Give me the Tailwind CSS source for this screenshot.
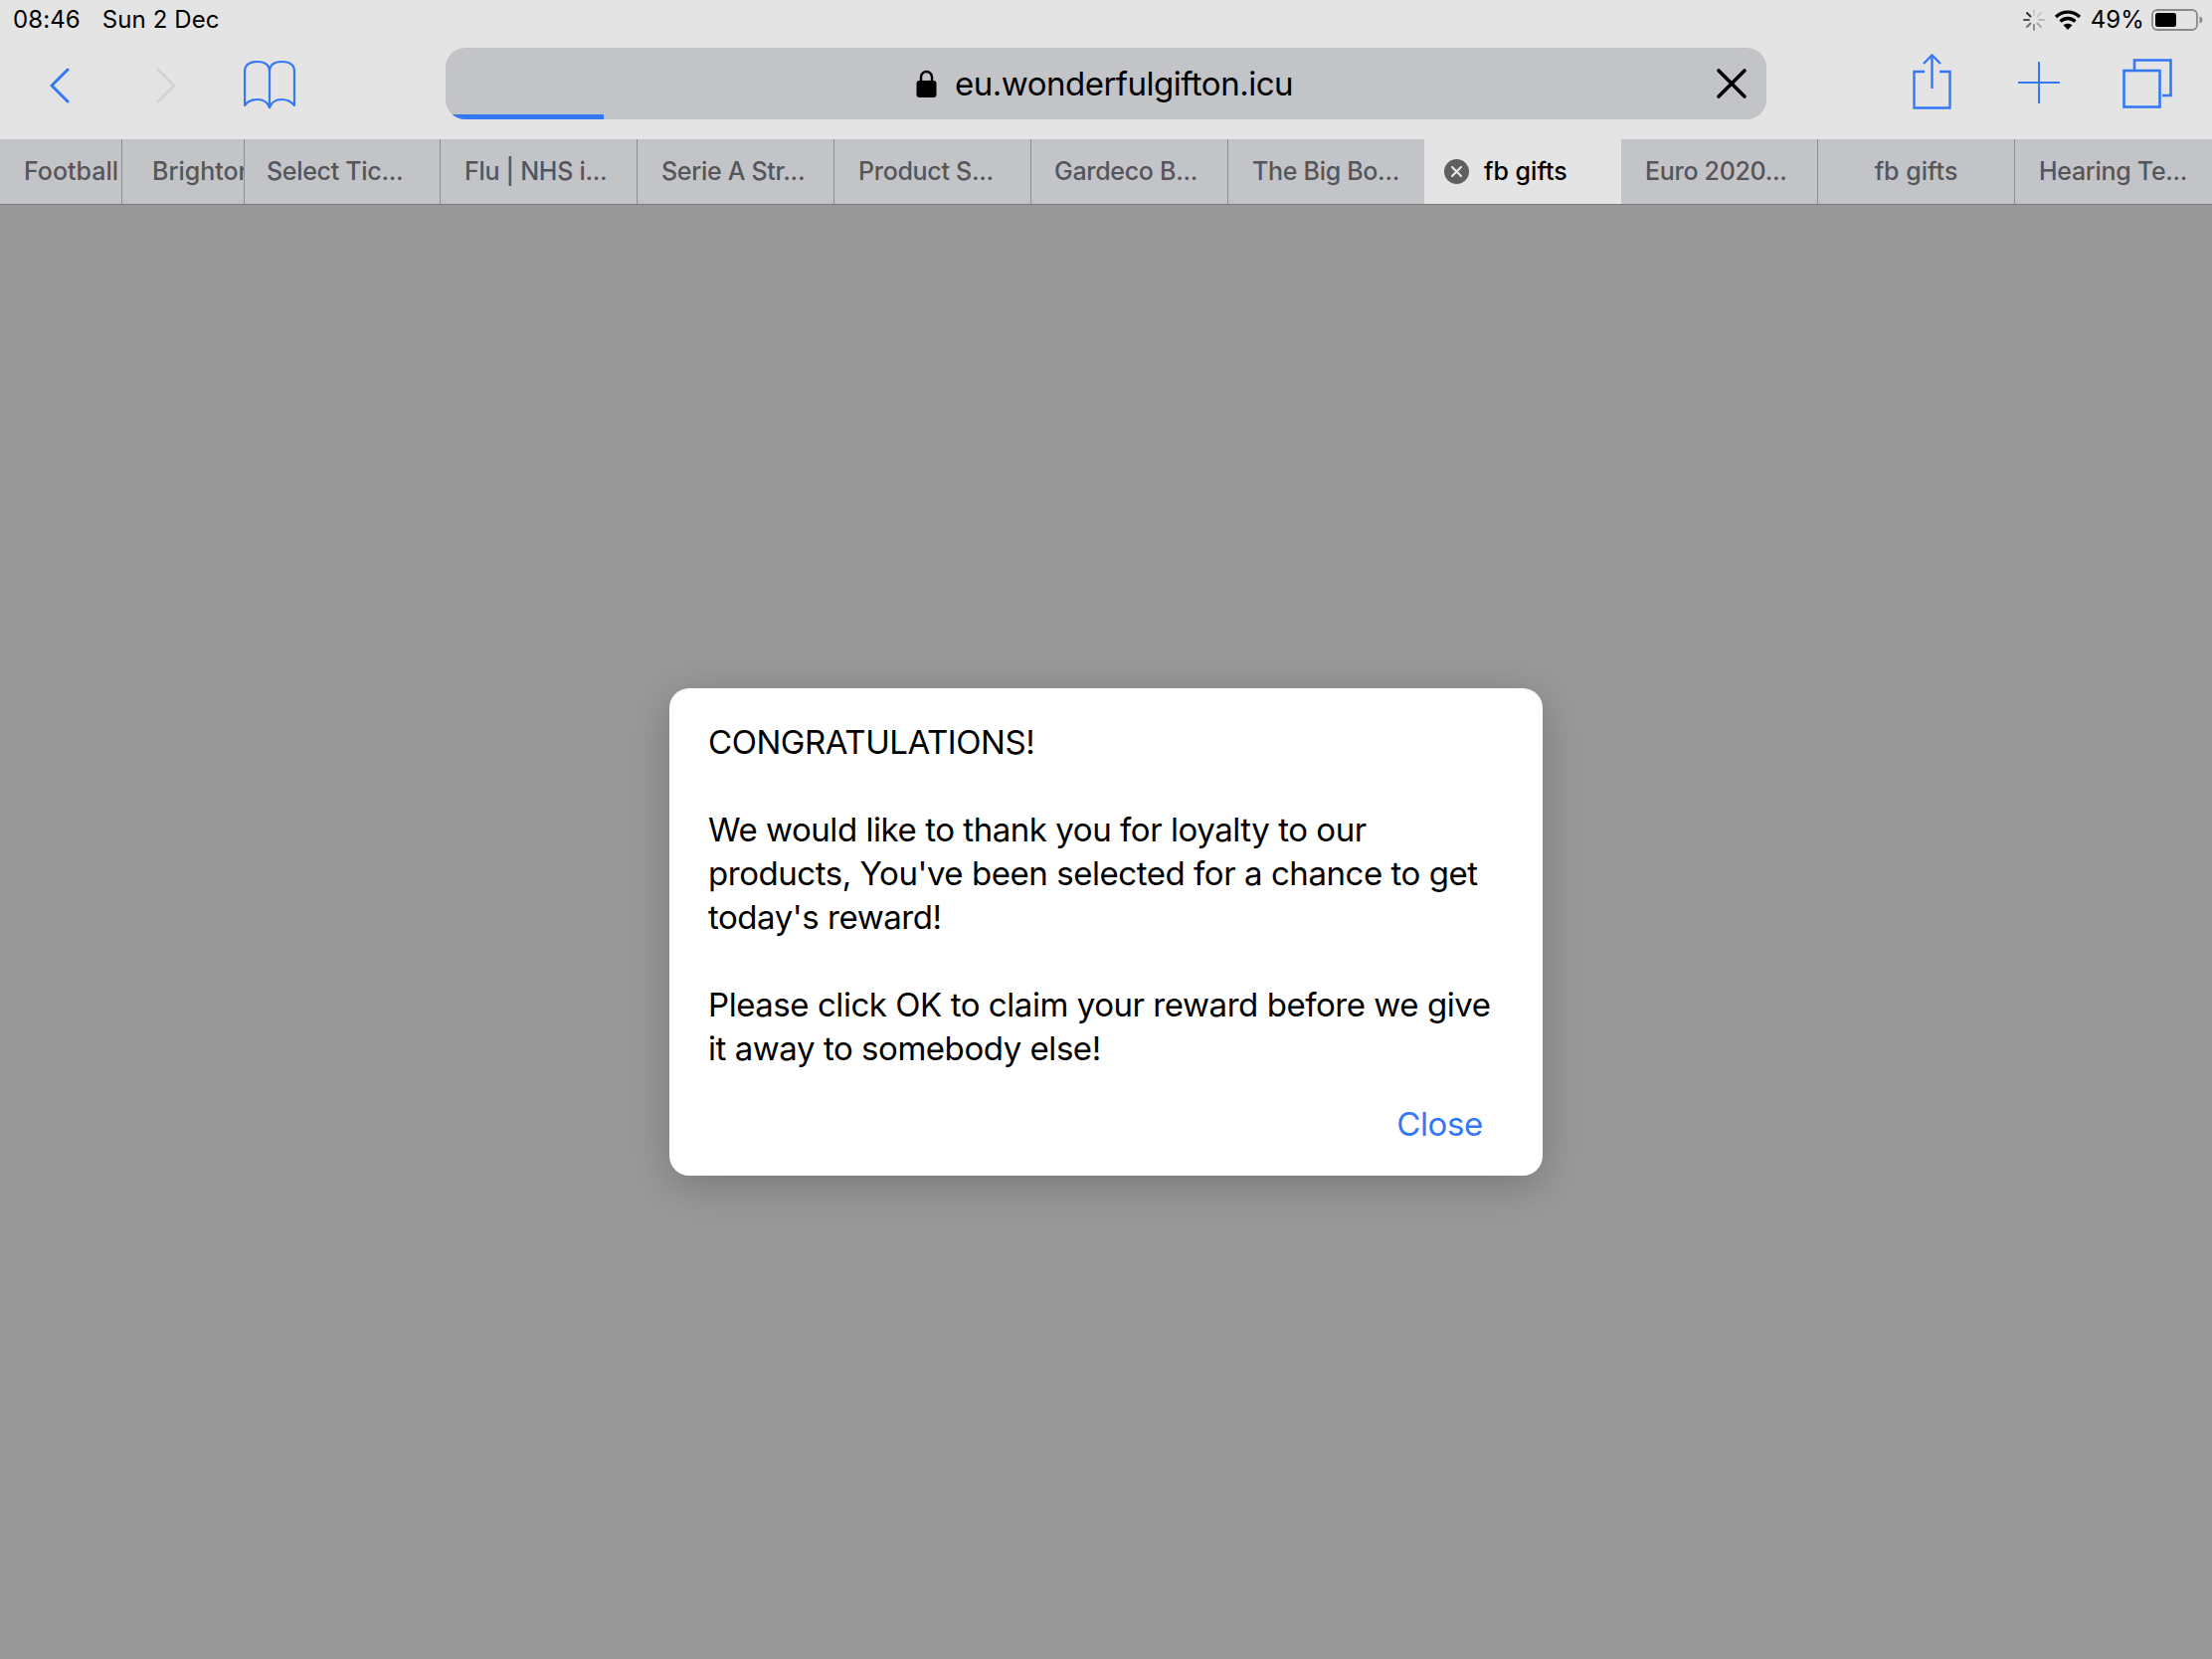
<!DOCTYPE html>
<html lang="en">
<head>
<meta charset="utf-8">
<title>fb gifts</title>
<script src="https://cdn.jsdelivr.net/npm/@tailwindcss/browser@4"></script>
</head>
<body class="m-0">
<div class="w-[2224px] h-[1668px] overflow-hidden flex flex-col bg-[#999999] font-[Inter,sans-serif] text-black">
  <header class="h-[205px] shrink-0 flex flex-col bg-[#e4e4e4]">
    <div class="h-[48px] shrink-0 flex items-start justify-between pt-[5px] pl-[13px] pr-[9px] text-[24px] leading-[30px] tracking-[0.1px]">
      <div class="flex gap-[22px]"><span>08:46</span><span>Sun 2 Dec</span></div>
      <div class="flex items-center gap-[8px] h-[30px]">
        <svg class="w-[22px] h-[22px] mr-[1px]" viewBox="0 0 22 22" fill="none" stroke-width="2" stroke-linecap="round">
          <path d="M11 1v5" stroke="#c8c8c8"/><path d="M18 4l-3.500 3.500" stroke="#c4c4c4"/><path d="M21 11h-5" stroke="#b8b8b8"/><path d="M18 18l-3.500-3.500" stroke="#a8a8a8"/><path d="M11 21v-5" stroke="#909090"/><path d="M4 18l3.500-3.500" stroke="#707070"/><path d="M1 11h5" stroke="#505050"/><path d="M4 4l3.500 3.500" stroke="#303030"/>
        </svg>
        <svg class="w-[28px] h-[22px]" viewBox="0 0 28 22" fill="none" stroke="#000" stroke-width="3.400">
          <path d="M2 8c7-6.500 17-6.500 24 0"/><path d="M6.500 12.500c4.500-4 10.500-4 15 0"/><path d="M14 21l-4.500-4.800c2.700-2 6.300-2 9 0z" fill="#000" stroke="none"/>
        </svg>
        <span class="ml-[1px]">49%</span>
        <svg class="w-[52px] h-[24px] -ml-[1px]" viewBox="0 0 52 24" fill="none">
          <rect x="1" y="2" width="45" height="20" rx="5" stroke="#8a8a8a" stroke-width="1.800"/>
          <rect x="4" y="5" width="21" height="14" rx="2.500" fill="#000"/>
          <path d="M48.500 8.500c2 .5 3 2 3 3.500s-1 3-3 3.500z" fill="#8a8a8a"/>
        </svg>
      </div>
    </div>
    <div class="h-[92px] shrink-0 flex items-center pb-[20px]">
      <svg class="w-[20px] h-[36px] ml-[50px] mt-[4px]" viewBox="0 0 20 36" fill="none" stroke="#3478f6" stroke-width="3" stroke-linecap="round" stroke-linejoin="round"><path d="M18 2 2 18l16 16"/></svg>
      <svg class="w-[20px] h-[36px] ml-[87px] mt-[4px]" viewBox="0 0 20 36" fill="none" stroke="#d2d2d2" stroke-width="3" stroke-linecap="round" stroke-linejoin="round"><path d="M2 2l16 16L2 34"/></svg>
      <svg class="w-[52px] h-[50px] ml-[68px] mt-[2px]" viewBox="0 0 52 50" fill="none" stroke="#3478f6" stroke-width="2.200" stroke-linejoin="round" stroke-linecap="round">
        <path d="M26 48V12C26 5 21 2 14 2 6 2 1 5 1 12v34c4-5 8-6 13-6 6 0 10 3 12 8"/>
        <path d="M26 12c0-7 5-10 12-10 8 0 13 3 13 10v34c-4-5-8-6-13-6-6 0-10 3-12 8"/>
      </svg>
      <div class="relative w-[1328px] h-[72px] ml-[151px] pr-[3px] rounded-[20px] overflow-hidden bg-[#c3c4c8] flex items-center justify-center">
        <svg class="w-[21px] h-[28px] mr-[18px]" viewBox="0 0 21 28"><path d="M5 13V7.500a5.500 5.500 0 0 1 11 0V13" fill="none" stroke="#000" stroke-width="2.400"/><rect x="0.500" y="11" width="20" height="17" rx="3" fill="#000"/></svg>
        <span class="text-[33px] leading-[44px] tracking-[-0.5px]">eu.wonderfulgifton.icu</span>
        <svg class="absolute left-[1277px] top-[20px] w-[32px] h-[32px]" viewBox="0 0 32 32" fill="none" stroke="#000" stroke-width="3.600" stroke-linecap="round"><path d="M3 3l26 26M29 3 3 29"/></svg>
        <div class="absolute left-0 bottom-0 w-[159px] h-[5px] bg-[#3478f6]"></div>
      </div>
      <svg class="w-[40px] h-[56px] ml-[147px] -mt-[5px]" viewBox="0 0 40 56" fill="none" stroke="#3478f6" stroke-width="2.400">
        <path d="M12 18H1.500v36.500h36V18H27"/><path d="M19.500 35V2"/><path d="M11 10l8.500-8.500L28 10"/>
      </svg>
      <svg class="w-[42px] h-[42px] ml-[66px] -mt-[2px]" viewBox="0 0 42 42" fill="none" stroke="#3478f6" stroke-width="2"><path d="M21 0v42M0 21h42"/></svg>
      <svg class="w-[50px] h-[50px] ml-[63px] -mt-[1px]" viewBox="0 0 50 50" fill="none" stroke="#3478f6" stroke-width="2.600">
        <rect x="1.500" y="12" width="36" height="36.500"/><path d="M12 11V1.500h36.500V37H40"/>
      </svg>
    </div>
    <nav class="h-[65px] shrink-0 flex text-[25px] leading-[65px] font-medium tracking-[-0.3px] text-[#56565a] bg-[#c3c4c8] whitespace-nowrap">
      <div class="w-[123px] pl-[24px] tracking-normal border-r border-[#8d8e91] overflow-hidden">Football</div>
      <div class="w-[123px] pl-[30px] tracking-normal border-r border-[#8d8e91] overflow-hidden">Brighton</div>
      <div class="w-[197px] pl-[22px] border-r border-[#8d8e91]">Select Tic...</div>
      <div class="w-[198px] pl-[24px] border-r border-[#8d8e91]">Flu | NHS i...</div>
      <div class="w-[198px] pl-[24px] border-r border-[#8d8e91]">Serie A Str...</div>
      <div class="w-[198px] pl-[24px] border-r border-[#8d8e91]">Product S...</div>
      <div class="w-[198px] pl-[23px] border-r border-[#8d8e91]">Gardeco B...</div>
      <div class="w-[197px] pl-[24px]">The Big Bo...</div>
      <div class="w-[198px] bg-[#e4e4e4] text-black tracking-normal flex items-center pl-[20px] gap-[15px]">
        <svg class="w-[25px] h-[25px]" viewBox="0 0 25 25"><circle cx="12.500" cy="12.500" r="12.500" fill="#5f5f62"/><path d="M8 8l9 9M17 8l-9 9" stroke="#e4e4e4" stroke-width="2.200" stroke-linecap="round"/></svg>
        <span>fb gifts</span>
      </div>
      <div class="w-[198px] pl-[24px] border-r border-[#8d8e91]">Euro 2020...</div>
      <div class="w-[198px] tracking-normal border-r border-[#8d8e91] text-center">fb gifts</div>
      <div class="flex-1 pl-[24px]">Hearing Te...</div>
    </nav>
  </header>
  <div class="h-[1px] shrink-0 bg-[#7c7c7c]"></div>
  <main class="flex-1 flex items-center justify-center">
    <div class="w-[878px] h-[490px] rounded-[20px] bg-white pt-[32px] pl-[39px] pr-[60px] shadow-[0_10px_45px_rgba(0,0,0,0.22)]">
      <p class="text-[33px] leading-[44px] tracking-[-0.45px] whitespace-nowrap">CONGRATULATIONS!<br><br>We would like to thank you for loyalty to our<br>products, You've been selected for a chance to get<br>today's reward!<br><br>Please click OK to claim your reward before we give<br>it away to somebody else!</p>
      <div class="mt-[32px] text-right text-[33px] leading-[44px] tracking-[-0.35px] text-[#3478f6]">Close</div>
    </div>
  </main>
</div>
</body>
</html>
